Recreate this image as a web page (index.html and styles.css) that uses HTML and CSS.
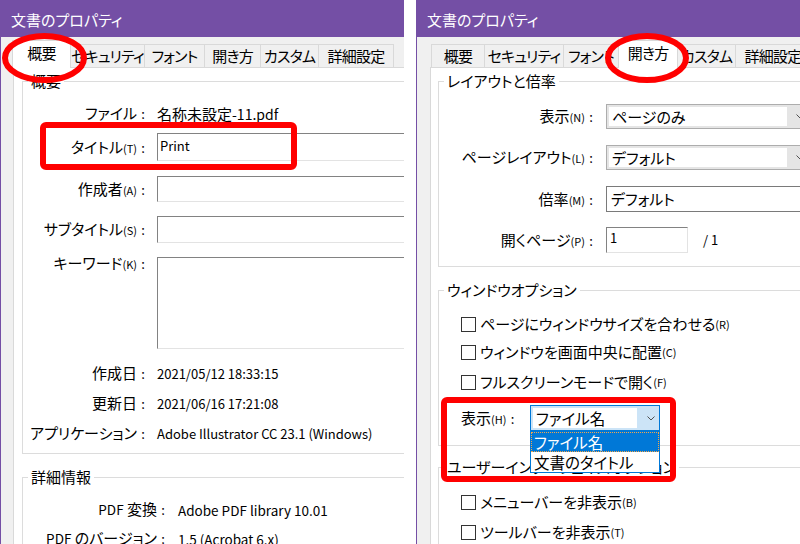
FILE: index.html
```html
<!DOCTYPE html>
<html lang="ja">
<head>
<meta charset="utf-8">
<title>文書のプロパティ</title>
<link rel="stylesheet" href="styles.css">
</head>
<body>
<section class="win win-left">
  <header class="titlebar">文書のプロパティ</header>
  <div class="winbody">
    <nav class="tabs">
      <span class="tab sel">概要</span>
      <span class="tab">セキュリティ</span>
      <span class="tab">フォント</span>
      <span class="tab">開き方</span>
      <span class="tab">カスタム</span>
      <span class="tab">詳細設定</span>
    </nav>
    <div class="panel">
      <fieldset class="group g-summary">
        <legend>概要</legend>
        <div class="row r-file"><span class="lbl">ファイル<i class="c">:</i></span><span class="val">名称未設定<span class="lat l14">-11.pdf</span></span></div>
        <div class="row r-title"><span class="lbl">タイトル<small>(T)</small><i class="c">:</i></span><span class="field lat">Print</span></div>
        <div class="row r-author"><span class="lbl">作成者<small>(A)</small><i class="c">:</i></span><span class="field"></span></div>
        <div class="row r-sub"><span class="lbl">サブタイトル<small>(S)</small><i class="c">:</i></span><span class="field"></span></div>
        <div class="row r-kw"><span class="lbl">キーワード<small>(K)</small><i class="c">:</i></span><span class="field"></span></div>
        <div class="row r-created"><span class="lbl">作成日<i class="c">:</i></span><span class="val lat">2021/05/12 18:33:15</span></div>
        <div class="row r-updated"><span class="lbl">更新日<i class="c">:</i></span><span class="val lat">2021/06/16 17:21:08</span></div>
        <div class="row r-app"><span class="lbl">アプリケーション<i class="c">:</i></span><span class="val lat">Adobe Illustrator CC 23.1 (Windows)</span></div>
      </fieldset>
      <fieldset class="group g-detail">
        <legend>詳細情報</legend>
        <div class="row r-conv"><span class="lbl"><span class="lat">PDF</span> 変換<i class="c">:</i></span><span class="val lat">Adobe PDF library 10.01</span></div>
        <div class="row r-ver"><span class="lbl"><span class="lat">PDF</span> のバージョン<i class="c">:</i></span><span class="val lat">1.5 (Acrobat 6.x)</span></div>
      </fieldset>
    </div>
  </div>
  <svg class="marks" width="404" height="544" viewBox="0 0 404 544" aria-hidden="true">
    <ellipse cx="44.5" cy="58" rx="39.5" ry="22" fill="none" stroke="#ff0000" stroke-width="6"/>
    <rect x="43" y="125" width="251" height="42" rx="3" fill="none" stroke="#ff0000" stroke-width="6"/>
  </svg>
</section>

<section class="win win-right">
  <header class="titlebar">文書のプロパティ</header>
  <div class="winbody">
    <nav class="tabs">
      <span class="tab">概要</span>
      <span class="tab">セキュリティ</span>
      <span class="tab">フォント</span>
      <span class="tab sel">開き方</span>
      <span class="tab">カスタム</span>
      <span class="tab">詳細設定</span>
    </nav>
    <div class="panel">
      <fieldset class="group g-layout">
        <legend>レイアウトと倍率</legend>
        <div class="row r-view"><span class="lbl">表示<small>(N)</small><i class="c">:</i></span>
          <span class="combo"><span class="cv">ページのみ</span><span class="arr"><svg width="8" height="5" viewBox="0 0 8 5"><polyline points="0.5,0.5 4,4 7.5,0.5" fill="none" stroke="#505050" stroke-width="1"/></svg></span></span></div>
        <div class="row r-pl"><span class="lbl">ページレイアウト<small>(L)</small><i class="c">:</i></span>
          <span class="combo"><span class="cv">デフォルト</span><span class="arr"><svg width="8" height="5" viewBox="0 0 8 5"><polyline points="0.5,0.5 4,4 7.5,0.5" fill="none" stroke="#505050" stroke-width="1"/></svg></span></span></div>
        <div class="row r-zoom"><span class="lbl">倍率<small>(M)</small><i class="c">:</i></span><span class="tbox">デフォルト</span></div>
        <div class="row r-open"><span class="lbl">開くページ<small>(P)</small><i class="c">:</i></span><span class="pagebox"><span class="field lat">1</span><span class="of lat">/ 1</span></span></div>
      </fieldset>
      <fieldset class="group g-window">
        <legend>ウィンドウオプション</legend>
        <div class="cb r-cb1"><span class="box"></span>ページにウィンドウサイズを合わせる<small>(R)</small></div>
        <div class="cb r-cb2"><span class="box"></span>ウィンドウを画面中央に配置<small>(C)</small></div>
        <div class="cb r-cb3"><span class="box"></span>フルスクリーンモードで開く<small>(F)</small></div>
        <div class="r-disp"><span class="dlbl">表示<small>(H)</small><i class="c">:</i></span>
          <span class="combo-wrap">
            <span class="combo open"><span class="cv">ファイル名</span><span class="arr"><svg width="8" height="5" viewBox="0 0 8 5"><polyline points="0.5,0.5 4,4 7.5,0.5" fill="none" stroke="#505050" stroke-width="1"/></svg></span></span>
            <span class="popup">
              <span class="opt hi">ファイル名</span>
              <span class="opt">文書のタイトル</span>
            </span>
          </span>
        </div>
      </fieldset>
      <fieldset class="group g-ui">
        <legend>ユーザーインターフェイスオプション</legend>
        <div class="cb r-cb4"><span class="box"></span>メニューバーを非表示<small>(B)</small></div>
        <div class="cb r-cb5"><span class="box"></span>ツールバーを非表示<small>(T)</small></div>
      </fieldset>
    </div>
  </div>
  <svg class="marks" width="384" height="544" viewBox="0 0 384 544" aria-hidden="true">
    <ellipse cx="231" cy="58" rx="39" ry="22" fill="none" stroke="#ff0000" stroke-width="6"/>
    <rect x="28" y="400" width="229" height="79" rx="3" fill="none" stroke="#ff0000" stroke-width="6"/>
  </svg>
</section>
</body>
</html>
```

FILE: styles.css
```css
* { box-sizing: border-box; }
html, body { margin: 0; padding: 0; }
body {
  width: 800px;
  height: 544px;
  overflow: hidden;
  background: #fff;
  display: flex;
  column-gap: 12px;
  font-family: "Noto Sans CJK JP", sans-serif;
  font-size: 15px;
  color: #000;
  font-feature-settings: "palt";
}

.win {
  position: relative;
  flex: none;
  height: 544px;
  overflow: hidden;
  display: flex;
  flex-direction: column;
}
.win-left { width: 404px; }
.win-right { width: 384px; }

.titlebar {
  flex: none;
  height: 37px;
  background: #744fa5;
  color: #fff;
  font-size: 15px;
  line-height: 20px;
  padding: 10px 0 0 11px;
}

.winbody {
  flex: 1;
  min-height: 0;
  display: flex;
  flex-direction: column;
  background: #f0f0f0;
  border-left: 1px solid #744fa5;
}
.win-left .winbody { padding-left: 12px; }
.win-right .winbody { padding-left: 13px; }

/* tabs */
.tabs {
  flex: none;
  height: 30px;
  display: flex;
  align-items: flex-end;
}
.tab {
  flex: none;
  height: 23px;
  margin-left: -1px;
  border: 1px solid #d9d9d9;
  border-bottom: 0;
  background: #f0f0f0;
  text-align: center;
  line-height: 21px;
  letter-spacing: -0.8px;
  white-space: nowrap;
}
.tab.sel {
  position: relative;
  z-index: 1;
  height: 28px;
  margin-bottom: -1px;
  padding-top: 1px;
  background: #fff;
}
.win-left .tab:nth-child(1) { width: 59px; }
.win-left .tab:nth-child(2) { width: 75px; }
.win-left .tab:nth-child(3) { width: 61px; }
.win-left .tab:nth-child(4) { width: 57px; }
.win-left .tab:nth-child(5) { width: 59px; }
.win-left .tab:nth-child(6) { width: 76px; }
.win-right .tab:nth-child(1) { width: 54px; margin-left: 1px; }
.win-right .tab:nth-child(2) { width: 80px; }
.win-right .tab:nth-child(3) { width: 56px; }
.win-right .tab:nth-child(4) { width: 60px; }
.win-right .tab:nth-child(5) { width: 59px; }
.win-right .tab:nth-child(6) { width: 76px; }

/* tab page */
.panel {
  flex: 1;
  min-height: 0;
  background: #fff;
  border-top: 1px solid #d9d9d9;
  border-left: 1px solid #d9d9d9;
  padding-top: 3px;
}
.win-left .panel { padding-left: 8px; }
.win-right .panel { padding-left: 7px; }

.group {
  margin: 0;
  padding: 0 0 10px;
  min-width: 0;
  width: 520px;
  border: 1px solid #dcdcdc;
}
.group legend {
  margin-left: 5px;
  padding: 0 3px;
  height: 20px;
  line-height: 20px;
  font-size: 15px;
}

small {
  font-size: 11px;
  font-feature-settings: normal;
}
.c {
  display: inline-block;
  width: 12px;
  text-align: center;
  font-style: normal;
  font-size: 13px;
}
.lat { font-size: 13px; }
.l14 { font-size: 14px; }

/* label / value rows */
.row {
  display: grid;
  align-items: center;
  line-height: 20px;
}
.lbl { text-align: right; white-space: nowrap; }
.val { white-space: nowrap; }

.g-summary .row { grid-template-columns: 126px 1fr; column-gap: 8px; }
.g-detail .row { grid-template-columns: 146px 1fr; column-gap: 9px; }
.g-detail .lat { font-size: 13.5px; }

.r-file { margin-top: 12px; height: 20px; }
.r-title { margin-top: 10px; height: 28px; }
.r-author { margin-top: 15px; height: 26px; }
.r-sub { margin-top: 14px; height: 27px; }
.r-kw { margin-top: 14px; height: 92px; align-items: start; }
.r-kw .lbl { margin-top: -4px; }
.r-created { margin-top: 14px; height: 20px; }
.r-updated { margin-top: 10px; height: 20px; }
.r-app { margin-top: 10px; height: 20px; }

.g-detail { margin-top: 13px; }
.r-conv { margin-top: 12px; height: 20px; }
.r-ver { margin-top: 9px; height: 20px; }

.field {
  display: block;
  height: 100%;
  background: #fff;
  border: 1px solid;
  border-color: #828282 #e3e3e3 #e3e3e3 #828282;
  padding: 3px 0 0 2px;
  line-height: 18px;
  white-space: nowrap;
}

/* right window: layout group */
.g-layout .row { grid-template-columns: 158px 1fr; column-gap: 9px; }
.g-layout { padding-bottom: 13px; }
.r-view { margin-top: 13px; height: 25px; }
.r-pl { margin-top: 16px; height: 25px; }
.r-zoom { margin-top: 16px; height: 26px; }
.r-open { margin-top: 15px; height: 26px; }

.combo {
  display: flex;
  height: 25px;
  width: 200px;
  border: 1px solid #adadad;
  background: #e5e5e5;
  padding: 2px 0 2px 2px;
}
.combo .cv {
  flex: none;
  width: 178px;
  background: #fff;
  line-height: 19px;
  padding-left: 3px;
  white-space: nowrap;
}
.combo .arr {
  flex: 1;
  display: flex;
  align-items: center;
  padding-left: 9px;
}
.combo .arr svg { display: block; }

.tbox {
  display: block;
  height: 26px;
  width: 200px;
  border: 1px solid #7a7a7a;
  background: #fff;
  padding-left: 4px;
  line-height: 23px;
}
.pagebox { display: flex; align-items: center; height: 26px; }
.pagebox .field {
  width: 82px;
  height: 26px;
  padding: 1px 0 0 3px;
}
.pagebox .of { margin-left: 15px; }

/* right window: window options */
.g-window { margin-top: 13px; padding-bottom: 14px; }
.cb {
  display: flex;
  align-items: center;
  height: 20px;
  line-height: 20px;
  padding-left: 22px;
  white-space: nowrap;
}
.cb .box {
  flex: none;
  width: 15px;
  height: 15px;
  border: 1px solid #333;
  background: #fff;
  margin-right: 4px;
}
.r-cb1 { margin-top: 14px; }
.r-cb2 { margin-top: 8px; }
.r-cb3 { margin-top: 10px; }

.r-disp {
  margin-top: 13px;
  height: 26px;
  display: flex;
  align-items: center;
  padding-left: 22px;
  line-height: 20px;
}
.dlbl { width: 60px; white-space: nowrap; margin-right: 9px; }
.combo-wrap { position: relative; display: block; }
.combo.open {
  width: 130px;
  height: 26px;
  border-color: #0078d7;
  background: #cce4f7;
}
.combo.open .cv {
  width: 104px;
  line-height: 20px;
  font-size: 15.5px;
}
.combo.open .arr { padding-left: 10px; }

.popup {
  position: absolute;
  z-index: 5;
  left: 0;
  top: 100%;
  width: 130px;
  border: 1px solid #0078d7;
  background: #fff;
  display: flex;
  flex-direction: column;
}
.opt {
  height: 20px;
  line-height: 20px;
  padding-left: 3px;
  font-size: 15.5px;
  white-space: nowrap;
}
.opt.hi {
  background: #0078d7;
  color: #fff;
  outline: 1px dotted #f2a64b;
  outline-offset: -1px;
}

/* right window: UI options */
.g-ui { margin-top: 11px; }
.r-cb4 { margin-top: 15px; }
.r-cb5 { margin-top: 10px; }

/* annotation overlay */
.marks {
  position: absolute;
  left: 0;
  top: 0;
  z-index: 10;
  pointer-events: none;
}
```
